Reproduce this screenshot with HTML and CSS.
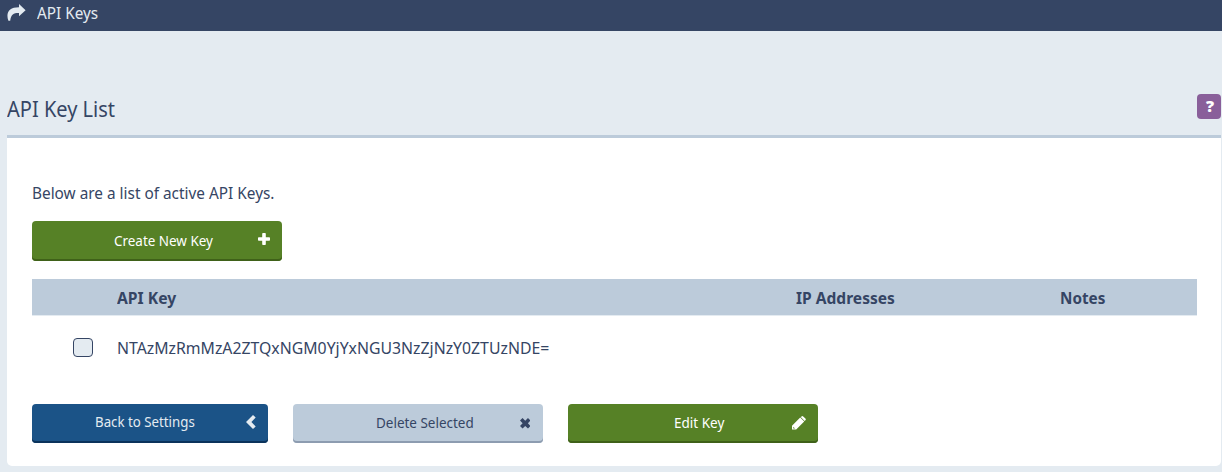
FILE: index.html
```html
<!DOCTYPE html>
<html lang="en">
<head>
<meta charset="utf-8">
<title>API Keys</title>
<link rel="stylesheet" href="styles.css">
</head>
<body>
<header class="topbar">
  <svg class="share" viewBox="0 0 19 18"><path d="M12 0 18.6 6.2 12 12.2V9C7.4 8.8 3.8 10 3.2 16.8H1.4C-1.4 8.8 1.8 3.2 12 3.2Z"/></svg>
  <span class="text crumb">API Keys</span>
</header>
<main>
  <div class="heading">
    <h1 class="text title">API Key List</h1>
    <button class="help" aria-label="Help">?</button>
  </div>
  <section class="panel">
    <p class="intro"><span class="text intro-text">Below are a list of active API Keys.</span></p>
    <button class="btn green create"><span class="text l-create">Create New Key</span>
      <svg class="plus" viewBox="0 0 12 12"><path d="M5 0h2q.8 0 .8.8v3.4h3.4q.8 0 .8.8v2q0 .8-.8.8H7.8v3.4q0 .8-.8.8H5q-.8 0-.8-.8V7.8H.8Q0 7.8 0 7V5q0-.8.8-.8h3.4V.8Q4.2 0 5 0z"/></svg></button>
    <div class="row head">
      <span></span><span class="text h-key">API Key</span><span class="text h-ip">IP Addresses</span><span class="text h-notes">Notes</span>
    </div>
    <div class="row entry">
      <span class="check"></span><span class="text key">NTAzMzRmMzA2ZTQxNGM0YjYxNGU3NzZjNzY0ZTUzNDE=</span>
    </div>
    <div class="actions">
      <button class="btn blue"><span class="text l-back">Back to Settings</span>
        <svg class="chev" viewBox="0 0 10 14"><path d="M7 0 9.7 2.6 5.4 7l4.3 4.4L7 14 0 7z"/></svg></button>
      <button class="btn gray"><span class="text l-delete">Delete Selected</span>
        <svg class="cross" viewBox="0 0 10 10"><path d="M2.4 0 5 2.5 7.6 0 10 2.4 7.5 5 10 7.6 7.6 10 5 7.5 2.4 10 0 7.6 2.5 5 0 2.4z"/></svg></button>
      <button class="btn green edit"><span class="text l-edit">Edit Key</span>
        <svg class="pencil" viewBox="0 0 14 14"><path fill-rule="evenodd" d="M0 13.6V9.8L8.2 1.6 12.2 5.6 4.2 13.6zM1.3 10.8v1.6h1.7zM8.7 1.1 9.6.4q.8-.6 1.6 0l2.2 2.2q.8.8 0 1.6l-.8.9z"/></svg></button>
    </div>
  </section>
</main>
</body>
</html>
```
FILE: styles.css
```css
* { box-sizing: border-box; }
body { margin: 0; background: #e4ebf1; color: #354564; font-family: "Noto Sans", sans-serif; font-size: 16.5px; }
.text { display: inline-block; white-space: nowrap; transform-origin: 0 50%; line-height: 24px; }
.topbar { height: 31px; background: #354564; color: #e4ebf1; display: flex; align-items: flex-start; padding: 1px 0 0 7px; }
.share { width: 19px; height: 18px; margin-top: 3px; fill: #e4ebf1; }
.crumb { margin-left: 11px; font-size: 16px; transform: scaleX(.957); }
main { padding-left: 7px; padding-right: 1px; }
.heading { height: 104px; display: flex; justify-content: space-between; align-items: flex-start; padding-top: 63px; }
.title { margin: 0; font-size: 22.5px; font-weight: 400; line-height: 30px; transform: scaleX(.89); }
.help { width: 24px; height: 25px; border: 0; border-radius: 4px; background: #895f9a; color: #fff; font: 800 16px/25px "Open Sans", sans-serif; padding: 0 0 0 2px; }
.panel { height: 331px; border-top: 3px solid #bccbda; border-radius: 0 0 5px 5px; background: #fff; padding: 43px 24px 0 25px; }
.intro { margin: 0; height: 40px; }
.intro-text { transform: scaleX(.931); }
.btn { position: relative; display: flex; align-items: flex-start; height: 39px; border: 0; border-radius: 4px; padding: 6px 0 0; font: 14px "Noto Sans", sans-serif; fill: currentColor; }
.btn svg { position: absolute; }
.green { width: 250px; background: #568126; color: #fff; box-shadow: inset 0 -2px #3f6119; }
.blue { width: 236px; background: #1b5387; color: #e4ebf1; box-shadow: inset 0 -2px #0b335b; }
.gray { width: 250px; background: #bccbda; color: #354564; box-shadow: inset 0 -2px #8d9cb0; }
.gray, .edit { padding-top: 7px; }
.create { height: 40px; padding-top: 8px; }
.row { display: grid; grid-template-columns: 85px 679px 264px 1fr; align-items: center; }
.head { height: 37px; margin-top: 18px; padding-top: 2px; background: #bccbda; border-bottom: 1px solid #e4ebf1; font-weight: 700; }
.entry { height: 63px; }
.h-key { transform: scaleX(.95); }
.h-ip { transform: scaleX(.943); }
.h-notes { transform: scaleX(.925); }
.key { transform: scaleX(.958); }
.check { width: 20px; height: 19px; margin-left: 41px; border: 1px solid #354564; border-radius: 4px; background: #e4ebf1; }
.actions { display: flex; gap: 25px; margin-top: 25px; }
.l-create { margin-left: 82px; transform: scaleX(.96); }
.l-back { margin-left: 63px; transform: scaleX(.948); }
.l-delete { margin-left: 82.5px; transform: scaleX(.962); }
.l-edit { margin-left: 106px; transform: scaleX(.965); }
.plus { width: 12px; height: 12px; left: 226px; top: 12px; }
.chev { width: 10px; height: 14px; left: 213.5px; top: 11px; }
.cross { width: 10.5px; height: 10.5px; left: 226.5px; top: 14px; }
.pencil { width: 14px; height: 14px; left: 224px; top: 12px; }
```
